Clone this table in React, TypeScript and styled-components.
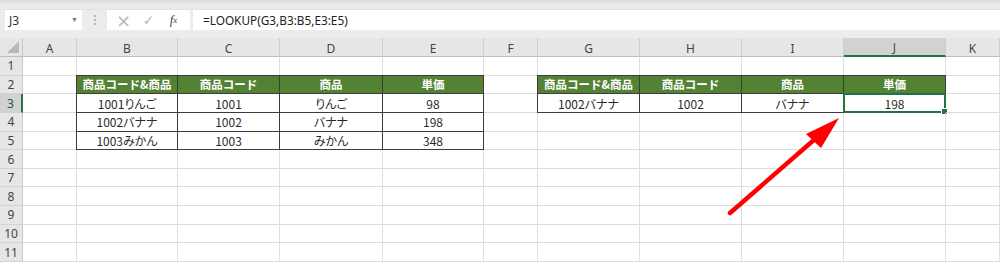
import React from "react";
import styled, { createGlobalStyle, css } from "styled-components";

const GlobalStyle = createGlobalStyle`
  html, body { margin: 0; padding: 0; background: #ffffff; }
  body { width: 1000px; height: 263px; overflow: hidden; }
`;

const GREEN = "#217346";
const HEAD_GREEN = "#548235";
const TABLE_LINE = "#3c3c3c";
const GRID_LINE = "#dedede";
const CJK = `"Noto Sans CJK JP", "Noto Sans", sans-serif`;

const COLS = ["A", "B", "C", "D", "E", "F", "G", "H", "I", "J", "K"];
const COL_WIDTHS = [54, 101, 102, 103, 101, 54, 102, 102, 102, 102, 54];

const Page = styled.div`
  position: relative;
  width: 1000px;
  height: 263px;
  background: #ffffff;
  overflow: hidden;
`;

/* ---------- ribbon strip and formula bar ---------- */

const TopStrip = styled.div`
  height: 9px;
  background: linear-gradient(#dcdcdc 0, #dcdcdc 2px, #e9e9e9 3px, #ebebeb 100%);
  border-bottom: 1px solid #e2e2e2;
`;

const FormulaBar = styled.div`
  display: flex;
  align-items: stretch;
  height: 20px;
  padding: 0 0 8px 5px;
  background: #ececec;
`;

const NameBox = styled.div`
  width: 77px;
  box-sizing: border-box;
  display: flex;
  align-items: center;
  justify-content: space-between;
  padding: 0 4px 0 4px;
  background: #ffffff;
  font-family: "Noto Sans", sans-serif;
  font-size: 12px;
  color: #333;
`;

const DropCaret = styled.span`
  font-size: 7px;
  color: #777;
  transform: translateY(-1px);
`;

const Grip = styled.div`
  width: 25px;
  display: flex;
  flex-direction: column;
  align-items: center;
  justify-content: center;
  gap: 2px;
  span {
    width: 2px;
    height: 2px;
    background: #b5b5b5;
  }
`;

const ButtonBox = styled.div`
  width: 83px;
  display: flex;
  align-items: center;
  justify-content: space-around;
  padding: 0 4px;
  box-sizing: border-box;
  background: #ffffff;
  margin-right: 3px;
`;

const IconButton = styled.span<{ $strong?: boolean; $size?: number }>`
  display: flex;
  align-items: center;
  justify-content: center;
  width: 22px;
  color: ${(p) => (p.$strong ? "#444" : "#b8b8b8")};
  font-family: ${(p) => (p.$strong ? `"Liberation Serif", serif` : `"DejaVu Sans", sans-serif`)};
  font-style: ${(p) => (p.$strong ? "italic" : "normal")};
  font-size: ${(p) => p.$size ?? 13}px;
`;

const FormulaInput = styled.div`
  flex: 1;
  display: flex;
  align-items: center;
  padding-left: 10px;
  background: #ffffff;
  font-family: "Noto Sans", sans-serif;
  font-size: 11.8px;
  color: #222;
`;

/* ---------- sheet grid ---------- */

const Sheet = styled.div`
  display: grid;
  grid-template-columns: 23px ${COL_WIDTHS.map((w) => `${w}px`).join(" ")};
  grid-template-rows: 19px repeat(11, 18.65px);
  font-family: ${CJK};
  font-size: 12px;
`;

const Corner = styled.div`
  position: relative;
  background: #e6e6e6;
  border-right: 1px solid #c8c8c8;
  border-bottom: 1px solid #bdbdbd;
  &::after {
    content: "";
    position: absolute;
    right: 3px;
    bottom: 3px;
    width: 0;
    height: 0;
    border-left: 12px solid transparent;
    border-bottom: 12px solid #b9b9b9;
  }
`;

const ColHead = styled.div<{ $active?: boolean }>`
  display: flex;
  align-items: center;
  justify-content: center;
  background: ${(p) => (p.$active ? "#d2d2d2" : "#e6e6e6")};
  border-right: 1px solid #cfcfcf;
  border-bottom: ${(p) => (p.$active ? `2px solid ${GREEN}` : "1px solid #bdbdbd")};
  color: ${(p) => (p.$active ? "#1d5e3a" : "#444")};
  font-family: "Noto Sans", sans-serif;
  font-size: 12px;
  padding-top: 2px;
  box-sizing: border-box;
`;

const RowHead = styled.div<{ $active?: boolean }>`
  display: flex;
  align-items: center;
  justify-content: center;
  background: ${(p) => (p.$active ? "#d2d2d2" : "#e6e6e6")};
  border-right: ${(p) => (p.$active ? `2px solid ${GREEN}` : "1px solid #c8c8c8")};
  border-bottom: 1px solid #d2d2d2;
  color: ${(p) => (p.$active ? "#1d5e3a" : "#444")};
  font-family: "Noto Sans", sans-serif;
  font-size: 12px;
  box-sizing: border-box;
`;

type Kind = "plain" | "head" | "data";

const Cell = styled.div<{ $kind: Kind; $top?: boolean; $left?: boolean }>`
  position: relative;
  display: flex;
  align-items: center;
  justify-content: center;
  box-sizing: border-box;
  white-space: nowrap;
  border-right: 1px solid ${GRID_LINE};
  border-bottom: 1px solid ${GRID_LINE};
  color: #2a2a2a;
  font-feature-settings: "palt";

  ${(p) =>
    p.$kind !== "plain" &&
    css`
      border-right-color: ${TABLE_LINE};
      border-bottom-color: ${TABLE_LINE};
      box-shadow: ${[
        p.$top ? `0 -1px 0 ${TABLE_LINE}` : "",
        p.$left ? `-1px 0 0 ${TABLE_LINE}` : "",
        p.$top && p.$left ? `-1px -1px 0 ${TABLE_LINE}` : "",
      ]
        .filter(Boolean)
        .join(", ") || "none"};
    `}

  ${(p) =>
    p.$kind === "head" &&
    css`
      background: ${HEAD_GREEN};
      color: #ffffff;
      font-weight: 700;
      font-size: 11.5px;
      font-feature-settings: normal;
    `}
`;

const SelectionFrame = styled.div`
  position: absolute;
  inset: -1px -1px -1px -1px;
  border: 2px solid ${GREEN};
  pointer-events: none;
  &::after {
    content: "";
    position: absolute;
    right: -4px;
    bottom: -4px;
    width: 5px;
    height: 5px;
    background: ${GREEN};
    border: 1px solid #ffffff;
  }
`;

const Pointer = styled.svg`
  position: absolute;
  left: 0;
  top: 0;
  pointer-events: none;
`;

/* ---------- sheet contents ---------- */

const HEADERS = ["商品コード&商品", "商品コード", "商品", "単価"];

const LEFT_ROWS = [
  ["1001りんご", "1001", "りんご", "98"],
  ["1002バナナ", "1002", "バナナ", "198"],
  ["1003みかん", "1003", "みかん", "348"],
];

const RIGHT_ROWS = [["1002バナナ", "1002", "バナナ", "198"]];

type CellInfo = { text: string; kind: Kind; top?: boolean; left?: boolean };

function cellAt(row: number, col: number): CellInfo {
  // left table: B2:E5 (cols 1..4)
  if (col >= 1 && col <= 4 && row >= 2 && row <= 5) {
    const c = col - 1;
    if (row === 2) return { text: HEADERS[c], kind: "head", top: true, left: c === 0 };
    return { text: LEFT_ROWS[row - 3][c], kind: "data", left: c === 0 };
  }
  // right table: G2:J3 (cols 6..9)
  if (col >= 6 && col <= 9 && row >= 2 && row <= 3) {
    const c = col - 6;
    if (row === 2) return { text: HEADERS[c], kind: "head", top: true, left: c === 0 };
    return { text: RIGHT_ROWS[row - 3][c], kind: "data", left: c === 0 };
  }
  return { text: "", kind: "plain" };
}

const ACTIVE_ROW = 3;
const ACTIVE_COL = 9;

export default function App() {
  const rows = Array.from({ length: 11 }, (_, i) => i + 1);

  return (
    <Page>
      <GlobalStyle />
      <TopStrip />
      <FormulaBar>
        <NameBox>
          <span>J3</span>
          <DropCaret>▼</DropCaret>
        </NameBox>
        <Grip>
          <span />
          <span />
          <span />
        </Grip>
        <ButtonBox>
          <IconButton $size={18}>×</IconButton>
          <IconButton $size={14}>✓</IconButton>
          <IconButton $strong $size={13}>
            f<sub style={{ fontSize: 9, verticalAlign: "baseline" }}>x</sub>
          </IconButton>
        </ButtonBox>
        <FormulaInput>=LOOKUP(G3,B3:B5,E3:E5)</FormulaInput>
      </FormulaBar>

      <Sheet>
        <Corner />
        {COLS.map((c, i) => (
          <ColHead key={c} $active={i === ACTIVE_COL}>
            {c}
          </ColHead>
        ))}
        {rows.map((r) => (
          <React.Fragment key={r}>
            <RowHead $active={r === ACTIVE_ROW}>{r}</RowHead>
            {COLS.map((_, ci) => {
              const info = cellAt(r, ci);
              const selected = r === ACTIVE_ROW && ci === ACTIVE_COL;
              return (
                <Cell key={ci} $kind={info.kind} $top={info.top} $left={info.left}>
                  {info.text}
                  {selected && <SelectionFrame />}
                </Cell>
              );
            })}
          </React.Fragment>
        ))}
      </Sheet>

      <Pointer width="1000" height="263" viewBox="0 0 1000 263">
        <line x1="730" y1="213" x2="815" y2="139" stroke="#ff0000" strokeWidth="4.5" strokeLinecap="round" />
        <polygon points="839,118 806,134 821,148" fill="#ff0000" />
      </Pointer>
    </Page>
  );
}
